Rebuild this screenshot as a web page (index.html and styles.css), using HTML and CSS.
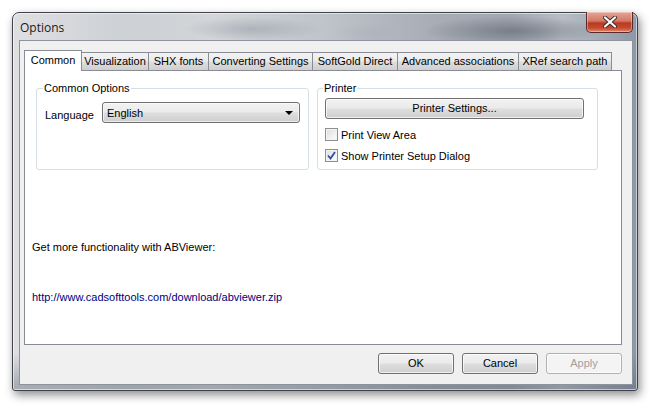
FILE: index.html
```html
<!DOCTYPE html>
<html>
<head>
<meta charset="utf-8">
<link rel="stylesheet" href="styles.css">
</head>
<body>
<div class="window">
  <div class="titlebar">
    <span class="title">Options</span>
    <div class="close"><svg width="14" height="12" viewBox="0 0 14 12"><path d="M2 1.5 L12 10.5 M12 1.5 L2 10.5" stroke="#3a2a2a" stroke-width="4" stroke-linecap="round"/><path d="M2 1.5 L12 10.5 M12 1.5 L2 10.5" stroke="#ffffff" stroke-width="2.2" stroke-linecap="round"/></svg></div>
  </div>
  <div class="client">
    <div class="tabs">
      <div class="tab active w-common">Common</div>
      <div class="tab w-vis">Visualization</div>
      <div class="tab w-shx">SHX fonts</div>
      <div class="tab w-conv">Converting Settings</div>
      <div class="tab w-sg">SoftGold Direct</div>
      <div class="tab w-adv">Advanced associations</div>
      <div class="tab w-xref">XRef search path</div>
    </div>
    <div class="panel">
      <div class="groups">
        <fieldset class="group common">
          <legend>Common Options</legend>
          <div class="lang-row">
            <span class="lang-label">Language</span>
            <div class="combo"><span>English</span><span class="arrow"></span></div>
          </div>
        </fieldset>
        <fieldset class="group printer">
          <legend>Printer</legend>
          <div class="btn wide">Printer Settings...</div>
          <div class="check-row"><span class="box"></span><span>Print View Area</span></div>
          <div class="check-row"><span class="box checked"><svg width="9" height="9" viewBox="0 0 9 9"><path d="M1 4.5 L3.5 7.5 L8 1" fill="none" stroke="#2c4fa0" stroke-width="1.8"/></svg></span><span>Show Printer Setup Dialog</span></div>
        </fieldset>
      </div>
      <p class="promo">Get more functionality with ABViewer:</p>
      <a class="link">http://www.cadsofttools.com/download/abviewer.zip</a>
    </div>
    <div class="buttons">
      <div class="btn dlg">OK</div>
      <div class="btn dlg">Cancel</div>
      <div class="btn dlg disabled">Apply</div>
    </div>
  </div>
</div>
</body>
</html>
```

FILE: styles.css
```css
html, body {
  margin: 0;
  padding: 0;
  background: #ffffff;
  width: 659px;
  height: 411px;
  overflow: hidden;
}
body {
  font-family: "Liberation Sans", Arial, sans-serif;
  font-size: 11px;
  color: #000;
}
.window {
  margin: 12px 0 0 12px;
  width: 626px;
  height: 379px;
  box-sizing: border-box;
  border: 1px solid #404348;
  border-radius: 7px 7px 3px 3px;
  padding: 0 4px 5px 6px;
  display: flex;
  flex-direction: column;
  position: relative;
  background:
    radial-gradient(ellipse 90px 15px at 500px 18px, rgba(110,116,126,0.8), rgba(110,116,126,0) 100%),
    radial-gradient(ellipse 70px 12px at 240px 16px, rgba(150,156,166,0.55), rgba(150,156,166,0) 100%),
    radial-gradient(ellipse 40px 10px at 360px 20px, rgba(170,176,186,0.5), rgba(170,176,186,0) 100%),
    linear-gradient(180deg, rgba(255,255,255,0) 0px, rgba(255,255,255,0) 340px, rgba(70,82,102,0.35) 372px),
    linear-gradient(90deg, #dedfe1 0%, #cdd0d5 18%, #d3d5d8 32%, #bfc3ca 50%, #a7acb5 68%, #a2a8b2 80%, #b9bec6 88%, #8d97a8 100%);
  box-shadow: 2px 4px 10px rgba(0,0,0,0.45), inset 0 0 0 1px rgba(255,255,255,0.55);
}
.titlebar {
  height: 27px;
  flex: none;
  display: flex;
  align-items: flex-start;
  position: relative;
}
.title {
  font-family: "Open Sans", "DejaVu Sans", sans-serif;
  font-size: 12px;
  color: #1a1a22;
  margin-top: 6px;
  margin-left: 1px;
}
.close {
  position: absolute;
  right: 0;
  top: -1px;
  width: 47px;
  height: 21px;
  box-sizing: border-box;
  border: 1px solid #5a2a26;
  border-top: none;
  border-radius: 0 0 5px 5px;
  background: linear-gradient(180deg, #e4a595 0%, #d47865 45%, #b83a22 55%, #c64a30 80%, #dd8c6c 100%);
  display: flex;
  align-items: center;
  justify-content: center;
  box-shadow: inset 0 0 0 1px rgba(255,255,255,0.35);
}
.client {
  flex: 1;
  background: #f0f0f0;
  border: 1px solid #8e929a;
  padding: 9px 10px 9px 4px;
  display: flex;
  flex-direction: column;
}
.tabs {
  display: flex;
  height: 20px;
  align-items: flex-start;
  position: relative;
  z-index: 2;
}
.tab {
  box-sizing: border-box;
  height: 18px;
  margin-top: 2px;
  border: 1px solid #898c95;
  border-bottom: none;
  background: linear-gradient(180deg, #f3f3f3 0%, #ebebeb 45%, #dddddd 55%, #cfcfcf 100%);
  text-align: center;
  line-height: 17px;
  white-space: nowrap;
  margin-right: -1px;
}
.tab.active {
  height: 21px;
  margin-top: 0;
  background: #ffffff;
  line-height: 18px;
  position: relative;
  z-index: 3;
}
.w-common { width: 58px; }
.w-vis { width: 68px; }
.w-shx { width: 61px; }
.w-conv { width: 105px; }
.w-sg { width: 86px; }
.w-adv { width: 122px; }
.w-xref { width: 94px; }
.panel {
  width: 598px;
  box-sizing: border-box;
  height: 275px;
  background: #ffffff;
  border: 1px solid #898c95;
  padding: 11px 0 0 11px;
  position: relative;
  z-index: 1;
}
.groups {
  display: flex;
  gap: 8px;
}
.group {
  margin: 0;
  box-sizing: border-box;
  height: 88px;
  border: 1px solid #d5dfe5;
  border-radius: 3px;
  padding: 0;
  min-width: 0;
}
.group legend {
  padding: 0 1px;
  margin-left: -2px;
  line-height: 13px;
  color: #000;
}
.common { width: 273px; padding: 7px 0 0 8px; }
.printer { width: 281px; padding: 3px 0 0 7px; }
.lang-row {
  display: flex;
  align-items: flex-start;
}
.lang-label {
  width: 57px;
  margin-top: 7px;
}
.combo {
  box-sizing: border-box;
  width: 198px;
  height: 21px;
  border: 1px solid #707070;
  border-radius: 3px;
  background: linear-gradient(180deg, #f2f2f2 0%, #ebebeb 45%, #dddddd 55%, #cfcfcf 100%);
  display: flex;
  align-items: center;
  justify-content: space-between;
  padding: 0 6px 0 4px;
  box-shadow: inset 0 0 0 1px rgba(255,255,255,0.6);
}
.arrow {
  width: 0;
  height: 0;
  border-left: 4px solid transparent;
  border-right: 4px solid transparent;
  border-top: 4px solid #000;
}
.btn {
  box-sizing: border-box;
  border: 1px solid #707070;
  border-radius: 3px;
  background: linear-gradient(180deg, #f2f2f2 0%, #ebebeb 45%, #dddddd 55%, #cfcfcf 100%);
  box-shadow: inset 0 0 0 1px rgba(255,255,255,0.7);
  text-align: center;
  height: 21px;
  line-height: 19px;
}
.btn.wide { width: 259px; }
.check-row {
  display: flex;
  align-items: center;
  height: 13px;
  margin-top: 9px;
  gap: 3px;
}
.check-row + .check-row { margin-top: 8px; }
.box {
  box-sizing: border-box;
  width: 13px;
  height: 13px;
  border: 1px solid #8e8f8f;
  background: linear-gradient(135deg, #dcdcdc 0%, #f4f4f4 70%, #ffffff 100%);
  box-shadow: inset 0 0 0 1px #f4f4f4;
  display: flex;
  align-items: center;
  justify-content: center;
}
.promo {
  margin: 71px 0 0 -4px;
  line-height: 13px;
}
.link {
  display: block;
  margin: 37px 0 0 -4px;
  line-height: 13px;
  color: #000080;
}
.buttons {
  display: flex;
  justify-content: flex-end;
  gap: 8px;
  margin-top: 8px;
  width: 598px;
}
.btn.dlg { width: 76px; }
.btn.disabled {
  color: #a0a0a0;
  border-color: #adb2b5;
  background: #f4f4f4;
}
```
